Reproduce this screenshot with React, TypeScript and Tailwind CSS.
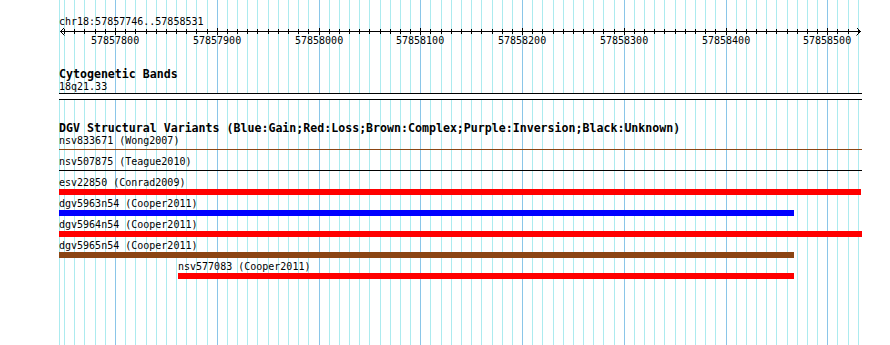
import React from "react";

const toX = (p: number) => Math.round(115 + (p - 57857800) * 1.01757);

type GridLine = { x: number; major: boolean };
const grid: GridLine[] = [{ x: 59, major: false }];
for (let p = 57857750; p <= 57858530; p += 10) {
  grid.push({ x: toX(p), major: p % 100 === 0 });
}

const majors = [57857800, 57857900, 57858000, 57858100, 57858200, 57858300, 57858400, 57858500];

type Feature = {
  label: string;
  labelX: number;
  kind: "bar" | "line";
  color: string;
  x: number;
  w: number;
};

const features: Feature[] = [
  { label: "nsv833671 (Wong2007)", labelX: 59, kind: "line", color: "#8b4513", x: 59, w: 803 },
  { label: "nsv507875 (Teague2010)", labelX: 59, kind: "line", color: "#000000", x: 59, w: 803 },
  { label: "esv22850 (Conrad2009)", labelX: 59, kind: "bar", color: "#ff0000", x: 59, w: 802 },
  { label: "dgv5963n54 (Cooper2011)", labelX: 59, kind: "bar", color: "#0000ff", x: 59, w: 735 },
  { label: "dgv5964n54 (Cooper2011)", labelX: 59, kind: "bar", color: "#ff0000", x: 59, w: 803 },
  { label: "dgv5965n54 (Cooper2011)", labelX: 59, kind: "bar", color: "#8b4513", x: 59, w: 735 },
  { label: "nsv577083 (Cooper2011)", labelX: 178, kind: "bar", color: "#ff0000", x: 178, w: 616 },
];

function Grid() {
  return (
    <svg
      className="absolute left-0 top-0 z-0"
      width={890}
      height={345}
      viewBox="0 0 890 345"
      shapeRendering="crispEdges"
    >
      {grid.map((g, i) => (
        <rect key={i} x={g.x} y={0} width={1} height={345} fill={g.major ? "#8ac6e8" : "#acebef"} />
      ))}
    </svg>
  );
}

function Ruler() {
  return (
    <div className="relative h-[20px] w-[890px]">
      <svg
        className="absolute left-0 top-0"
        width={890}
        height={20}
        viewBox="0 0 890 20"
        shapeRendering="crispEdges"
      >
        <rect x={60} y={3} width={801} height={1} fill="#000" />
        {grid.slice(1).map((g, i) => (
          <rect
            key={i}
            x={g.x}
            y={g.major ? 0 : 1}
            width={1}
            height={g.major ? 7 : 5}
            fill="#000"
          />
        ))}
        <path d="M60.5 3.5 L64.5 -0.5 M60.5 3.5 L64.5 7.5" stroke="#000" strokeWidth={1} fill="none" shapeRendering="auto" />
        <path d="M860.5 3.5 L856.5 -0.5 M860.5 3.5 L856.5 7.5" stroke="#000" strokeWidth={1} fill="none" shapeRendering="auto" />
      </svg>
      {majors.map((p) => (
        <span
          key={p}
          className="absolute top-[6px] h-[13px] w-[48px] text-center font-['DejaVu_Sans_Mono',monospace] text-[10px] leading-[13px] text-black"
          style={{ left: toX(p) - 24 }}
        >
          {p}
        </span>
      ))}
    </div>
  );
}

function FeatureRow({ f }: { f: Feature }) {
  return (
    <div className="flex h-[21px] flex-col">
      <div
        className="h-[13px] whitespace-pre font-['DejaVu_Sans_Mono',monospace] text-[10px] leading-[13px] text-black"
        style={{ paddingLeft: f.labelX }}
      >
        {f.label}
      </div>
      <div className="h-[8px]">
        {f.kind === "bar" ? (
          <div className="h-[6px]" style={{ marginLeft: f.x, width: f.w, backgroundColor: f.color }} />
        ) : (
          <div className="mt-[2px] h-[1px]" style={{ marginLeft: f.x, width: f.w, backgroundColor: f.color }} />
        )}
      </div>
    </div>
  );
}

export default function App() {
  return (
    <div className="relative h-[345px] w-[890px] overflow-hidden bg-white">
      <Grid />
      <div className="relative z-10 flex flex-col pt-[15px]">
        <div className="h-[13px] pl-[59px] font-['DejaVu_Sans_Mono',monospace] text-[10px] leading-[13px] text-black">
          chr18:57857746..57858531
        </div>
        <Ruler />
        <div className="h-[20px]" />
        <div className="h-[12px] pl-[59px] font-['DejaVu_Sans_Mono',monospace] text-[11.6px] font-bold leading-[12px] text-black">
          Cytogenetic Bands
        </div>
        <div className="h-[13px] pl-[59px] font-['DejaVu_Sans_Mono',monospace] text-[10px] leading-[13px] text-black">
          18q21.33
        </div>
        <div className="ml-[59px] h-[7px] w-[803px] border-y border-black bg-white" />
        <div className="h-[22px]" />
        <div className="h-[12px] whitespace-pre pl-[59px] font-['DejaVu_Sans_Mono',monospace] text-[11.6px] font-bold leading-[12px] text-black">
          DGV Structural Variants (Blue:Gain;Red:Loss;Brown:Complex;Purple:Inversion;Black:Unknown)
        </div>
        {features.map((f) => (
          <FeatureRow key={f.label} f={f} />
        ))}
      </div>
    </div>
  );
}
